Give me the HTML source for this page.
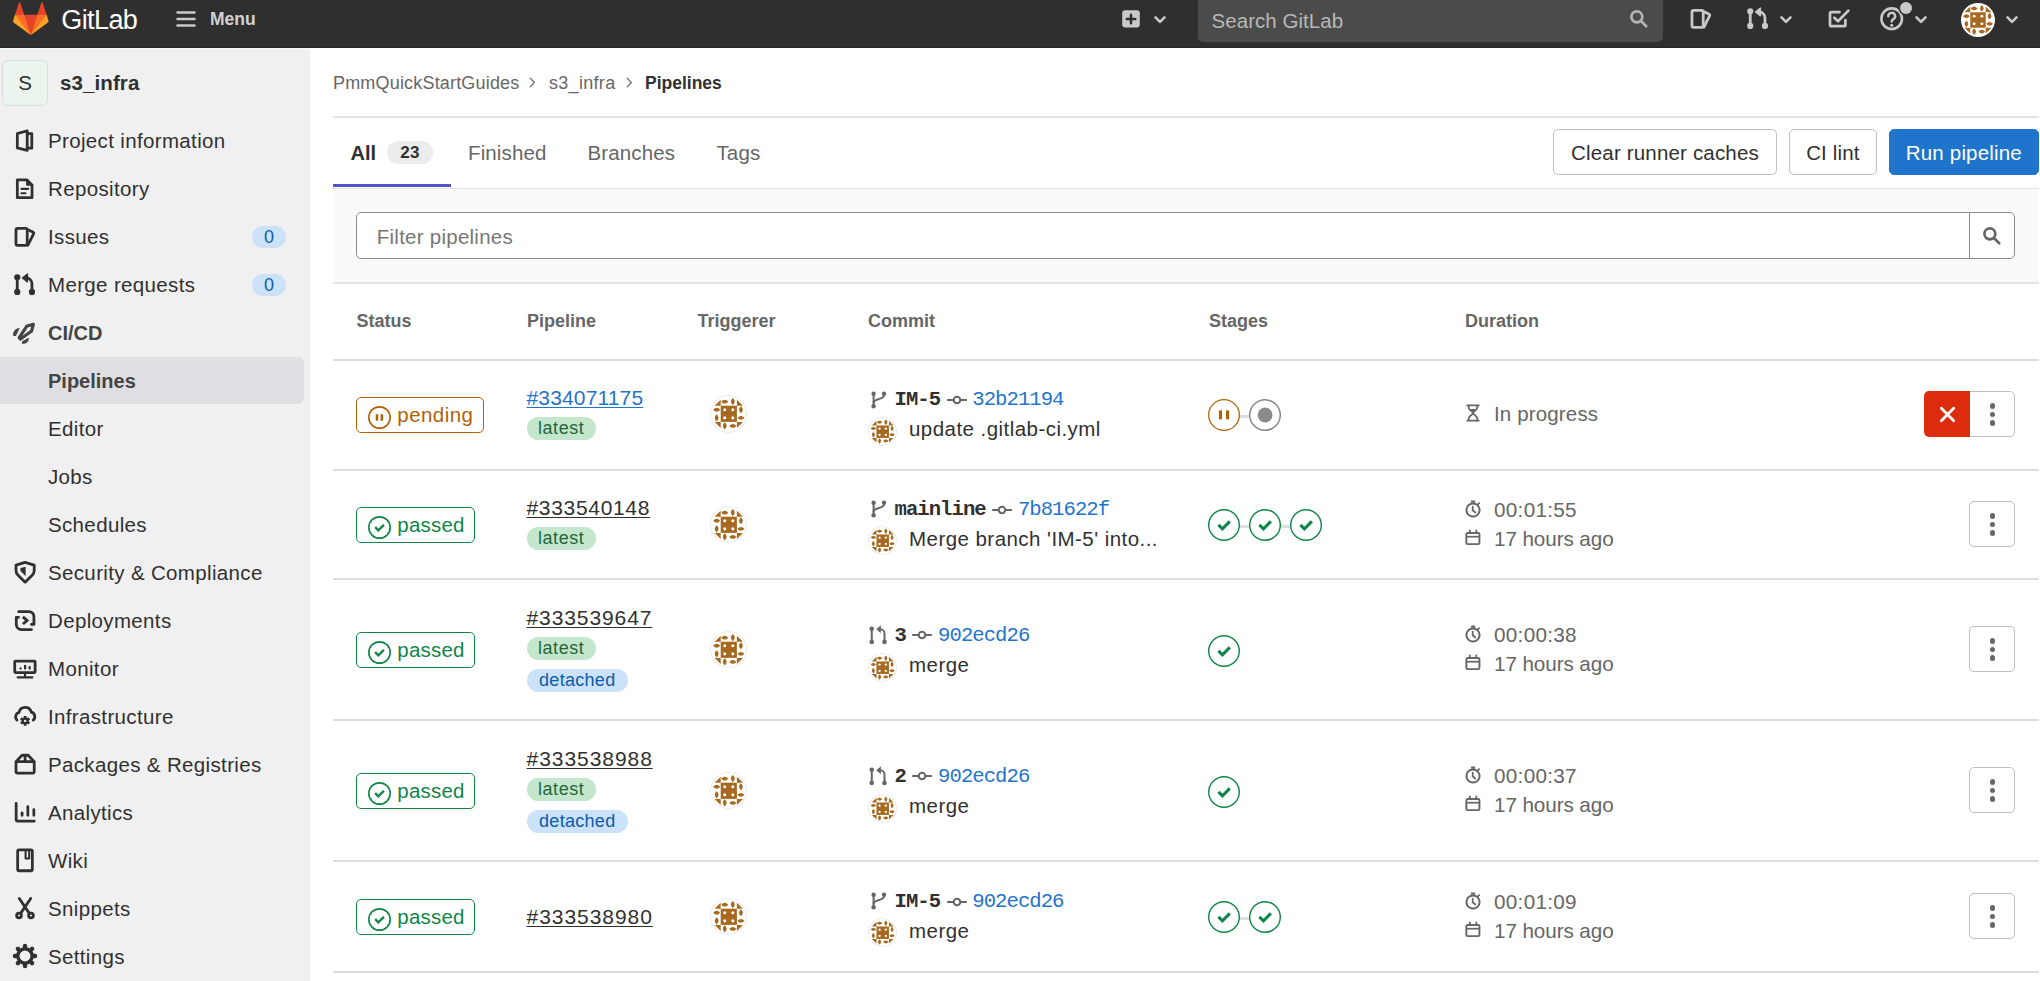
<!DOCTYPE html>
<html><head><meta charset="utf-8"><title>Pipelines · s3_infra · GitLab</title>
<style>
*{box-sizing:border-box;margin:0;padding:0}
html,body{width:2040px;height:981px;overflow:hidden;background:#fff}
body{font-family:"Liberation Sans",sans-serif;color:#303030;position:relative;font-size:20.5px;letter-spacing:.3px}
.abs{position:absolute}
.t{position:absolute;white-space:nowrap;line-height:1}
svg{display:block;overflow:visible}
#nav{position:absolute;left:0;top:0;width:2040px;height:48px;background:#2f2f2f;border-bottom:1px solid #272727}
#side{position:absolute;left:0;top:48px;width:310px;height:933px;background:#f0f0f0;border-top:1px solid #f8f8f8}
.ni{position:absolute;fill:#c9c9c9}
.si{position:absolute;left:12.7px;width:24px;height:24px;fill:none;stroke:#303030;stroke-width:1.85;stroke-linecap:round;stroke-linejoin:round}
.sl{position:absolute;left:48px;white-space:nowrap;line-height:24px;height:24px;font-size:20.5px;letter-spacing:.35px;color:#303030}
.pill{position:absolute;border-radius:20px;text-align:center;white-space:nowrap}
.hline{position:absolute;height:1px;background:#e1e1e1}
.th{position:absolute;top:311px;font-weight:700;font-size:18px;color:#666;line-height:20px;white-space:nowrap;letter-spacing:0}
.btn{position:absolute;top:129.1px;height:46.2px;border:1px solid #bfbfbf;border-radius:5px;background:#fff;line-height:45.4px;text-align:center;white-space:nowrap;font-size:20.5px;letter-spacing:.17px}
.badge{position:absolute;left:356px;height:36px;border:1.7px solid;border-radius:5px;background:#fff}
.mono{font-family:"Liberation Mono",monospace;letter-spacing:0}
.gray{color:#666}
.av{position:absolute;border-radius:50%;overflow:hidden;box-shadow:0 0 0 .6px rgba(0,0,0,.16)}
.av svg{width:100%;height:100%}
.dots{position:absolute;left:1969px;width:46px;height:46px;border:1px solid #bfbfbf;border-radius:5px;background:#fff}
.dots i{position:absolute;left:19.8px;width:5.6px;height:5.6px;border-radius:50%;background:#666}
.stg{position:absolute;width:32px;height:32px}
</style></head>
<body>

<svg width="0" height="0" style="position:absolute">
<defs>
<symbol id="av" viewBox="1 1 44 44">
<rect width="46" height="46" fill="#fff"/>
<g fill="#a7691f">
<rect x="13" y="13" width="20" height="20"/>
<path id="lh" d="M-4.4 0Q0-4.8 4.4 0 0 4.8-4.4 0Z" transform="translate(18 8)"/>
<path d="M-4.4 0Q0-4.8 4.4 0 0 4.8-4.4 0Z" transform="translate(28 8) rotate(90)"/>
<path d="M-4.4 0Q0-4.8 4.4 0 0 4.8-4.4 0Z" transform="translate(38 18) rotate(90)"/>
<path d="M-4.4 0Q0-4.8 4.4 0 0 4.8-4.4 0Z" transform="translate(38 28)"/>
<path d="M-4.4 0Q0-4.8 4.4 0 0 4.8-4.4 0Z" transform="translate(28 38)"/>
<path d="M-4.4 0Q0-4.8 4.4 0 0 4.8-4.4 0Z" transform="translate(18 38) rotate(90)"/>
<path d="M-4.4 0Q0-4.8 4.4 0 0 4.8-4.4 0Z" transform="translate(8 28) rotate(90)"/>
<path d="M-4.4 0Q0-4.8 4.4 0 0 4.8-4.4 0Z" transform="translate(8 18)"/>
<path d="M13 13V5.5L5.5 13Z"/><path d="M33 13V5.5L40.5 13Z"/><path d="M13 33V40.5L5.5 33Z"/><path d="M33 33V40.5L40.5 33Z"/>
</g>
<g fill="#fff"><circle cx="18" cy="18" r="1.9"/><circle cx="28" cy="18" r="1.9"/><circle cx="18" cy="28" r="1.9"/><circle cx="28" cy="28" r="1.9"/></g>
</symbol>
<symbol id="chev" viewBox="0 0 16 16"><path d="M4.22 6.22a.75.75 0 0 1 1.06 0L8 8.94l2.72-2.72a.75.75 0 1 1 1.06 1.06l-3.25 3.25a.75.75 0 0 1-1.06 0L4.22 7.28a.75.75 0 0 1 0-1.06z"/></symbol>
<symbol id="search" viewBox="0 0 16 16"><path fill-rule="evenodd" d="M11.5 7a4.5 4.5 0 1 1-9 0 4.5 4.5 0 0 1 9 0zm-.82 4.74a6 6 0 1 1 1.06-1.06l3.04 3.04a.75.75 0 1 1-1.06 1.06l-3.04-3.04z"/></symbol>
<symbol id="issues" viewBox="0 0 16 16"><path fill="none" stroke="currentColor" stroke-width="1.5" stroke-linejoin="round" stroke-linecap="round" d="M3.2 1.75h5.6a1.45 1.45 0 0 1 1.45 1.45v9.6a1.45 1.45 0 0 1-1.45 1.45H3.2a1.45 1.45 0 0 1-1.45-1.45V3.2A1.45 1.45 0 0 1 3.2 1.75zM10.25 4.2h1.1a1 1 0 0 1 .9.55l1.9 3.8a1 1 0 0 1 0 .9l-2.3 4.3a1 1 0 0 1-1.1.5M10.25 4.4l1.3 3.2-1.3 3.6"/></symbol>
<symbol id="mr" viewBox="0 0 16 16"><g fill="none" stroke="currentColor" stroke-width="1.5" stroke-linecap="round" stroke-linejoin="round"><path d="M3.2 4.6v6.8"/><path d="M12.8 11.2V7.3a2.3 2.3 0 0 0-2.3-2.3H8.2"/><path d="M10 2.3 7.6 5l2.4 2.4"/></g><circle cx="3.2" cy="3.1" r="1.6" fill="currentColor"/><circle cx="3.2" cy="12.9" r="1.6" fill="currentColor"/><circle cx="12.8" cy="12.9" r="1.6" fill="currentColor"/></symbol>
<symbol id="ok" viewBox="0 0 14 14"><g fill-rule="evenodd"><path d="M0 7a7 7 0 1 1 14 0A7 7 0 0 1 0 7z"/><path d="M13 7A6 6 0 1 0 1 7a6 6 0 0 0 12 0z" fill="#fff"/><path d="M6.278 7.697L5.045 6.464a.296.296 0 0 0-.42-.002l-.613.614a.298.298 0 0 0 .002.42l1.91 1.909a.5.5 0 0 0 .703.005l.265-.265L9.997 6.04a.291.291 0 0 0-.009-.408l-.614-.614a.29.29 0 0 0-.408-.009L6.278 7.697z"/></g></symbol>
<symbol id="pend" viewBox="0 0 14 14"><g fill-rule="evenodd"><path d="M0 7a7 7 0 1 1 14 0A7 7 0 0 1 0 7z"/><path d="M13 7A6 6 0 1 0 1 7a6 6 0 0 0 12 0z" fill="#fff"/><path d="M4.7 5.3c0-.2.1-.3.3-.3h.9c.2 0 .3.1.3.3v3.4c0 .2-.1.3-.3.3H5c-.2 0-.3-.1-.3-.3V5.3zm3 0c0-.2.1-.3.3-.3h.9c.2 0 .3.1.3.3v3.4c0 .2-.1.3-.3.3H8c-.2 0-.3-.1-.3-.3V5.3z"/></g></symbol>
<symbol id="branch" viewBox="0 0 16 16"><g fill="none" stroke="currentColor" stroke-width="1.6" stroke-linecap="round" stroke-linejoin="round"><path d="M4.2 5.2v5.6"/><path d="M11.8 5.4v.6a2.6 2.6 0 0 1-2.6 2.6H6.6a2.4 2.4 0 0 0-2.4 2.2"/></g><circle cx="4.2" cy="3.6" r="1.7" fill="currentColor"/><circle cx="4.2" cy="12.6" r="1.7" fill="currentColor"/><circle cx="11.8" cy="3.8" r="1.7" fill="currentColor"/></symbol>
<symbol id="commit" viewBox="0 0 16 16"><g fill="none" stroke="currentColor" stroke-width="1.6" stroke-linecap="round"><circle cx="8" cy="8" r="2.9"/><path d="M1 8h4M11 8h4"/></g></symbol>
<symbol id="timer" viewBox="0 0 16 16"><g fill="none" stroke="currentColor" stroke-width="1.5" stroke-linecap="round" stroke-linejoin="round"><circle cx="8" cy="9" r="5.6"/><path d="M8 5.8V9l1.8 1.6M6.4 1.4h3.2M12.6 3.6l.8-.8"/></g></symbol>
<symbol id="cal" viewBox="0 0 16 16"><g fill="none" stroke="currentColor" stroke-width="1.5" stroke-linecap="round" stroke-linejoin="round"><rect x="1.9" y="3.2" width="12.2" height="10.6" rx="1.2"/><path d="M1.9 6.7h12.2M5 1.6v2M11 1.6v2"/></g></symbol>
<symbol id="hour" viewBox="0 0 16 16"><g fill="none" stroke="currentColor" stroke-width="1.5" stroke-linecap="round" stroke-linejoin="round"><path d="M3.6 1.9h8.8M3.6 14.1h8.8M4.6 2v1.6c0 1.8 3.4 3 3.4 4.4 0 1.4-3.4 2.6-3.4 4.4V14M11.4 2v1.6c0 1.8-3.4 3-3.4 4.4 0 1.4 3.4 2.6 3.4 4.4V14"/></g></symbol>
</defs>
</svg>
<div id="nav">
<svg class="abs" style="left:12.6px;top:1.1px" width="35.6" height="35.6" viewBox="0 0 36 36"><path fill="#e24329" d="M2 14l9.38 9v-9l-4-12.28c-.205-.632-1.176-.632-1.38 0z"/><path fill="#e24329" d="M34 14l-9.38 9v-9l4-12.28c.205-.632 1.176-.632 1.38 0z"/><path fill="#e24329" d="M18 34.38 3 14 33 14Z"/><path fill="#fc6d26" d="M18 34.38 11.38 14 2 14 6 25Z"/><path fill="#fc6d26" d="M18 34.38 24.62 14 34 14 30 25Z"/><path fill="#fca326" d="M2 14L.1 20.16c-.18.565 0 1.2.5 1.56l17.42 12.66z"/><path fill="#fca326" d="M34 14l1.9 6.16c.18.565 0 1.2-.5 1.56L18 34.38z"/></svg>
<div class="t" style="left:61.3px;top:4.6px;font-size:27px;color:#fff;letter-spacing:-.6px;line-height:30px">GitLab</div>
<svg class="ni" style="left:174px;top:6.8px" width="24" height="24" viewBox="0 0 16 16"><path d="M1.5 3.7a.85.85 0 0 1 .85-.85h11.3a.85.85 0 0 1 0 1.7H2.35a.85.85 0 0 1-.85-.85zm0 4.3a.85.85 0 0 1 .85-.85h11.3a.85.85 0 0 1 0 1.7H2.35A.85.85 0 0 1 1.5 8zm.85 3.45a.85.85 0 0 0 0 1.7h11.3a.85.85 0 0 0 0-1.7H2.35z"/></svg>
<div class="t" style="left:210px;top:9px;font-size:17.5px;font-weight:700;color:#d2d2d2;letter-spacing:0;line-height:20px">Menu</div>
<svg class="abs" style="left:1122px;top:10px" width="18" height="18" viewBox="0 0 18 18"><rect x=".2" y=".2" width="17.6" height="17.4" rx="3" fill="#c9c9c9"/><path d="M9 4.7V13.3M4.7 9H13.3" stroke="#2f2f2f" stroke-width="2.5" stroke-linecap="round"/></svg>
<svg class="abs" style="left:1154.3px;top:14px" width="12" height="12" viewBox="0 0 12 12"><path d="M1.5 3.3 6 7.8 10.5 3.3" fill="none" stroke="#c9c9c9" stroke-width="2.6" stroke-linecap="round" stroke-linejoin="round"/></svg>
<div class="abs" style="left:1197.8px;top:-6px;width:465.7px;height:47.8px;background:#4b4b4b;border-radius:5px"></div>
<div class="t" style="left:1211.5px;top:8.7px;font-size:20.5px;color:#b8b8b8;letter-spacing:.05px;line-height:24px">Search GitLab</div>
<svg class="abs" style="left:1629px;top:9px" width="20" height="20" viewBox="0 0 20 20"><g fill="none" stroke="#b4b4b4" stroke-width="2.7" stroke-linecap="round"><circle cx="7.85" cy="7.85" r="5.45"/><path d="M12 12 17.2 17.2"/></g></svg>
<svg class="abs" style="left:1779.7px;top:14px" width="12" height="12" viewBox="0 0 12 12"><path d="M1.5 3.3 6 7.8 10.5 3.3" fill="none" stroke="#c9c9c9" stroke-width="2.6" stroke-linecap="round" stroke-linejoin="round"/></svg>
<svg class="abs" style="left:1826px;top:7px" width="26" height="26" viewBox="0 0 26 26"><g fill="none" stroke="#c9c9c9" stroke-width="2.7" stroke-linecap="round" stroke-linejoin="round"><path d="M13.5 5.1H5.5A1.5 1.5 0 0 0 4 6.6V17.7A1.5 1.5 0 0 0 5.5 19.2H17.9A1.5 1.5 0 0 0 19.4 17.7V13"/><path d="M8.3 10.7 12 14.3 22.4 3.6"/></g></svg>
<svg class="abs" style="left:1879px;top:5.9px" width="26" height="26" viewBox="0 0 26 26"><circle cx="12.7" cy="12.7" r="10.3" fill="none" stroke="#c9c9c9" stroke-width="2.6"/><path fill="none" stroke="#c9c9c9" stroke-width="2.4" stroke-linecap="round" d="M9.3 10.2A3.4 3.4 0 1 1 14.4 13.1C13.2 13.8 12.7 14.4 12.7 15.6"/><circle cx="12.7" cy="19.3" r="1.55" fill="#c9c9c9"/></svg>
<div class="abs" style="left:1899.6px;top:2.1px;width:12.4px;height:12.4px;border-radius:50%;background:#c9c9c9;box-shadow:0 0 0 1.5px #2f2f2f"></div>
<svg class="abs" style="left:1915px;top:14px" width="12" height="12" viewBox="0 0 12 12"><path d="M1.5 3.3 6 7.8 10.5 3.3" fill="none" stroke="#c9c9c9" stroke-width="2.6" stroke-linecap="round" stroke-linejoin="round"/></svg>
<div class="av" style="left:1961.2px;top:2.6px;width:34px;height:34px;box-shadow:none"><svg><use href="#av"/></svg></div>
<svg class="abs" style="left:2006.2px;top:14px" width="12" height="12" viewBox="0 0 12 12"><path d="M1.5 3.3 6 7.8 10.5 3.3" fill="none" stroke="#c9c9c9" stroke-width="2.6" stroke-linecap="round" stroke-linejoin="round"/></svg>
</div>
<div id="side"></div>
<div class="abs" style="left:2px;top:60px;width:46px;height:46px;border-radius:6px;background:#ecf4ee;border:1px solid #d5e0d8"></div>
<div class="t" style="left:2px;top:71px;width:46px;text-align:center;font-size:20.5px;line-height:24px;letter-spacing:0">S</div>
<div class="t" style="left:60px;top:71px;font-size:20.5px;font-weight:700;line-height:24px;letter-spacing:.1px">s3_infra</div>
<svg class="si" style="left:1688.1px;top:6.9px;stroke:#c9c9c9" viewBox="0 0 16 16"><rect x="2.65" y="2.2" width="7.5" height="11.45" rx="1.1"/><path d="M10.3 3 14.2 4.9a.6.6 0 0 1 .25.8L10.6 13.5"/></svg>
<svg class="si" style="left:1745.2px;top:7.1px;stroke:#c9c9c9" viewBox="0 0 16 16"><path d="M3.5 3.2V12.4M13.3 12V7.1A3.8 3.8 0 0 0 9.5 3.3H9.3"/><circle cx="3.5" cy="2.85" r="1.15" fill="#c9c9c9"/><circle cx="3.5" cy="12.65" r="1.15" fill="#c9c9c9"/><circle cx="13.3" cy="12.65" r="1.15" fill="#c9c9c9"/><path d="M7 3.3 10.3.700V5.9Z" fill="#c9c9c9" stroke-width=".9"/></svg>
<div class="abs" style="left:0;top:356.9px;width:304px;height:47px;background:#dfdfe3;border-radius:0 6px 6px 0"></div>
<svg class="si" style="left:11.9px;top:129px;stroke:#303030" viewBox="0 0 16 16"><path d="M3.55 3 10.15 1.2V14.3L3.55 12.6Z"/><path d="M10.15 3.1H13.2V12.8H10.15"/></svg>
<div class="sl" style="top:128.5px;">Project information</div>
<svg class="si" style="left:11.9px;top:177px;stroke:#303030" viewBox="0 0 16 16"><path d="M3.55 1.95H10L13.35 5.3V13.75H3.55Z"/><path d="M9.9 2.1V5.4H13.2Z" fill="#303030" stroke-width="1"/><path d="M6.3 7.9H10.8M6.3 10.8H9" stroke-width="1.4"/></svg>
<div class="sl" style="top:176.5px;">Repository</div>
<svg class="si" style="left:11.9px;top:225px;stroke:#303030" viewBox="0 0 16 16"><rect x="2.65" y="2.2" width="7.5" height="11.45" rx="1.1"/><path d="M10.3 3 14.2 4.9a.6.6 0 0 1 .25.8L10.6 13.5"/></svg>
<div class="sl" style="top:224.5px;">Issues</div>
<svg class="si" style="left:11.9px;top:273px;stroke:#303030" viewBox="0 0 16 16"><path d="M3.5 3.2V12.4M13.3 12V7.1A3.8 3.8 0 0 0 9.5 3.3H9.3"/><circle cx="3.5" cy="2.85" r="1.15" fill="#303030"/><circle cx="3.5" cy="12.65" r="1.15" fill="#303030"/><circle cx="13.3" cy="12.65" r="1.15" fill="#303030"/><path d="M7 3.3 10.3.700V5.9Z" fill="#303030" stroke-width=".9"/></svg>
<div class="sl" style="top:272.5px;">Merge requests</div>
<svg class="si" style="left:11.9px;top:321px;stroke:#444" viewBox="0 0 16 16"><path d="M14.25 2.15 10 3.3 4.8 11.1 5.7 12.05 13.1 6.6Z" stroke-width="2.1"/><path d="M5.2 4.7Q.9 4.7.5 9.7L2.5 10.1Z" fill="#444" stroke="none"/><path d="M11.3 11Q11.4 15 6.8 15.4L6.6 13.7Z" fill="#444" stroke="none"/></svg>
<div class="sl" style="top:320.5px;font-weight:700;color:#444;letter-spacing:0;font-size:20px;">CI/CD</div>
<div class="sl" style="top:368.5px;font-weight:700;color:#444;letter-spacing:0;font-size:20px;">Pipelines</div>
<div class="sl" style="top:416.5px;">Editor</div>
<div class="sl" style="top:464.5px;">Jobs</div>
<div class="sl" style="top:512.5px;">Schedules</div>
<svg class="si" style="left:12.7px;top:561px;stroke:#303030" viewBox="0 0 16 16"><path d="M8.07.950 14.15 2.7V6.3Q14.15 8.2 12.6 9.7L8.07 14.1 3.55 9.7Q2 8.2 2 6.3V2.7Z"/><path d="M5 4.7 8.4 3.8V10L5 6.6Z" fill="#303030" stroke="none"/></svg>
<div class="sl" style="top:560.5px;">Security &amp; Compliance</div>
<svg class="si" style="left:12.7px;top:609px;stroke:#303030" viewBox="0 0 16 16"><path d="M3.8 1.75H10.65A3.3 3.3 0 0 1 13.95 5.05V10.3H12.3M3.7 5.55H2.2V10.4A3.3 3.3 0 0 0 5.5 13.7H12.35"/><path d="M6.6 5.3 9.35 7.65 6.6 10" stroke-width="1.9" stroke-linejoin="miter" stroke-linecap="butt"/></svg>
<div class="sl" style="top:608.5px;">Deployments</div>
<svg class="si" style="left:12.7px;top:657px;stroke:#303030" viewBox="0 0 16 16"><rect x="1.15" y="2.8" width="13.6" height="7.6" rx=".5"/><path d="M8 10.6V13M3.1 13.6H12.9" stroke-width="1.4"/><path d="M5 7.7V7.6M8.07 7.7V5.9M11.1 7.7V6.7" stroke-width="1.5"/></svg>
<div class="sl" style="top:656.5px;">Monitor</div>
<svg class="si" style="left:12.7px;top:705px;stroke:#303030" viewBox="0 0 16 16"><path d="M2.7 10.1A3.1 3.1 0 0 1 4 4.9 4.2 4.2 0 0 1 12.2 4.8 3.1 3.1 0 0 1 13.5 10.1"/><g stroke-width="1.9" stroke-linecap="butt"><path d="M8.07 7.3V13.9M5.21 8.95 10.93 12.25M5.21 12.25 10.93 8.95"/></g><circle cx="8.07" cy="10.6" r="2.3" fill="#303030" stroke="none"/><circle cx="8.07" cy="10.6" r=".8" fill="#f0f0f0" stroke="none"/></svg>
<div class="sl" style="top:704.5px;">Infrastructure</div>
<svg class="si" style="left:12.7px;top:753px;stroke:#303030" viewBox="0 0 16 16"><path d="M2 5.75H14.15V12.35A1 1 0 0 1 13.15 13.35H3A1 1 0 0 1 2 12.35ZM2 5.75 6 1.5H10.1L14.15 5.75M8.07 1.5V5.75"/></svg>
<div class="sl" style="top:752.5px;">Packages &amp; Registries</div>
<svg class="si" style="left:12.7px;top:801px;stroke:#303030" viewBox="0 0 16 16"><path d="M2.1 1.6V12.4A1 1 0 0 0 3.1 13.4H14.2"/><path d="M6.05 7.9V9.5M9.9 3.7V9.5M13.9 5.7V9.5"/></svg>
<div class="sl" style="top:800.5px;">Analytics</div>
<svg class="si" style="left:12.7px;top:849px;stroke:#303030" viewBox="0 0 16 16"><rect x="3.1" y=".6" width="9.8" height="13.9" rx="1"/><path d="M8.4.8V6.3H10.8V.8" stroke-width="1.4"/></svg>
<div class="sl" style="top:848.5px;">Wiki</div>
<svg class="si" style="left:12.7px;top:897px;stroke:#303030" viewBox="0 0 16 16"><circle cx="4" cy="12.3" r="1.6"/><circle cx="12" cy="12.3" r="1.6"/><path d="M4.2 1 10.9 10.9M11.8 1 5.1 10.9"/></svg>
<div class="sl" style="top:896.5px;">Snippets</div>
<svg class="si" style="left:12.7px;top:944.1px;stroke:#303030" viewBox="0 0 16 16"><circle cx="8" cy="8" r="4.8" stroke-width="2.3"/><path d="M8 1.9V1.3M8 14.1V14.7M1.9 8H1.3M14.1 8H14.7M3.7 3.7 3.26 3.26M12.3 12.3 12.74 12.74M3.7 12.3 3.26 12.74M12.3 3.7 12.74 3.26" stroke-width="2.9"/></svg>
<div class="sl" style="top:944.5px;">Settings</div>
<div class="pill" style="left:252px;top:225.5px;width:34px;height:22.5px;background:#cbe2f9;color:#0b5cad;font-size:18px;line-height:22.5px;letter-spacing:0">0</div>
<div class="pill" style="left:252px;top:273.5px;width:34px;height:22.5px;background:#cbe2f9;color:#0b5cad;font-size:18px;line-height:22.5px;letter-spacing:0">0</div>
<div class="t gray" style="left:333px;top:72.6px;font-size:18px;line-height:20px;letter-spacing:.18px">PmmQuickStartGuides</div>
<div class="t gray" style="left:549px;top:72.6px;font-size:18px;line-height:20px;letter-spacing:.3px">s3_infra</div>
<div class="t" style="left:645px;top:72.6px;font-size:17.5px;font-weight:700;line-height:20px;letter-spacing:0">Pipelines</div>
<svg class="abs" style="left:529px;top:77px" width="7" height="11" viewBox="0 0 7 11"><path d="M1.3 1.3 5.4 5.5 1.3 9.7" fill="none" stroke="#777" stroke-width="1.4" stroke-linecap="round" stroke-linejoin="round"/></svg>
<svg class="abs" style="left:626px;top:77px" width="7" height="11" viewBox="0 0 7 11"><path d="M1.3 1.3 5.4 5.5 1.3 9.7" fill="none" stroke="#777" stroke-width="1.4" stroke-linecap="round" stroke-linejoin="round"/></svg>
<div class="hline" style="left:333px;top:116px;width:1706px;height:1.5px;background:#e3e3e3"></div>
<div class="t" style="left:350.5px;top:141px;font-size:20px;font-weight:700;line-height:24px;letter-spacing:0">All</div>
<div class="pill" style="left:387px;top:141px;width:46px;height:23px;background:#ececec;color:#303030;font-size:17px;font-weight:700;line-height:23px;letter-spacing:.4px">23</div>
<div class="t gray" style="left:468px;top:141px;font-size:20.5px;line-height:24px;letter-spacing:.12px">Finished</div>
<div class="t gray" style="left:587.5px;top:141px;font-size:20.5px;line-height:24px;letter-spacing:.12px">Branches</div>
<div class="t gray" style="left:716.5px;top:141px;font-size:20.5px;line-height:24px;letter-spacing:.12px">Tags</div>
<div class="hline" style="left:333px;top:187.5px;width:1706px;background:#e3e3e3"></div>
<div class="abs" style="left:333px;top:184.3px;width:117.7px;height:3.2px;background:#5252cc"></div>
<div class="btn" style="left:1553px;width:224px">Clear runner caches</div>
<div class="btn" style="left:1788.7px;width:88.5px">CI lint</div>
<div class="btn" style="left:1888.7px;width:150.3px;background:#1f75cb;border-color:#1f75cb;color:#fff">Run pipeline</div>
<div class="abs" style="left:333px;top:188.5px;width:1706px;height:94px;background:#fafafa"></div>
<div class="hline" style="left:333px;top:282px;width:1706px;height:1.5px;background:#e3e3e3"></div>
<div class="abs" style="left:355.8px;top:212px;width:1659px;height:46.5px;border:1.3px solid #8c8c8c;border-radius:5px;background:#fff"></div>
<div class="abs" style="left:1969px;top:213px;width:1.3px;height:44.5px;background:#8c8c8c"></div>
<div class="t" style="left:376.8px;top:224.5px;font-size:20.5px;color:#767676;line-height:24px;letter-spacing:.25px">Filter pipelines</div>
<svg class="abs" style="left:1982.2px;top:226.4px" width="20" height="20" viewBox="0 0 20 20"><g fill="none" stroke="#666" stroke-width="2.7" stroke-linecap="round"><circle cx="7.85" cy="7.85" r="5.45"/><path d="M12 12 17.2 17.2"/></g></svg>
<div class="th" style="left:356.5px">Status</div>
<div class="th" style="left:527px">Pipeline</div>
<div class="th" style="left:697.5px">Triggerer</div>
<div class="th" style="left:868px">Commit</div>
<div class="th" style="left:1209px">Stages</div>
<div class="th" style="left:1465px">Duration</div>
<div class="hline" style="left:333px;top:359px;width:1706px;height:1.5px;background:#dcdcdc"></div>
<div class="hline" style="left:333px;top:469px;width:1706px;height:1.5px;background:#dcdcdc"></div>
<div class="badge" style="top:397px;width:127.5px;border-color:#b26205"></div>
<svg class="abs" style="left:368px;top:405.5px;fill:#b26205" width="23" height="23"><use href="#pend"/></svg>
<div class="t" style="left:397.3px;top:402.7px;font-size:20.5px;line-height:24px;color:#b26205;letter-spacing:.45px">pending</div>
<div class="t" style="left:526.5px;top:386.3px;font-size:21px;line-height:24px;color:#1f75cb;text-decoration:underline;text-decoration-thickness:1.3px;text-underline-offset:1.5px;letter-spacing:.15px">#334071175</div>
<div class="pill" style="left:526.5px;top:417.3px;width:69.3px;height:23px;background:#c3e6cd;color:#24663b;font-size:18px;line-height:23px;letter-spacing:.55px">latest</div>
<div class="av" style="left:710.7px;top:396.2px;width:35.6px;height:35.6px"><svg><use href="#av"/></svg></div>
<svg class="abs" style="left:869.5px;top:390.8px" width="18" height="18" viewBox="0 0 18 18"><g fill="none" stroke="#666" stroke-width="2" stroke-linecap="round"><path d="M3.6 2.6V15.4"/><path d="M14 2.6V4.5C14 8.9 3.6 7 3.6 11.8"/></g><g fill="#666"><circle cx="3.6" cy="2.7" r="2.2"/><circle cx="14" cy="2.7" r="2.2"/><circle cx="3.6" cy="15.3" r="2.2"/></g></svg>
<div class="t mono" style="left:894.5px;top:388.1px;font-size:20.6px;letter-spacing:-.96px;font-weight:700;line-height:24px">IM-5</div>
<svg class="abs" style="left:946.5px;top:395px" width="20" height="10" viewBox="0 0 20 10"><g fill="none" stroke="#666" stroke-width="2.05" stroke-linecap="round"><circle cx="10" cy="5" r="3.3"/><path d="M.9 5H6.2M13.8 5H19.1"/></g></svg>
<div class="t mono" style="left:972.3px;top:388.1px;font-size:20.6px;letter-spacing:-.96px;line-height:24px;color:#1f75cb">32b21194</div>
<div class="av" style="left:869.1px;top:417.5px;width:27.4px;height:27.4px"><svg><use href="#av"/></svg></div>
<div class="t" style="left:909px;top:417px;font-size:20.5px;line-height:24px;letter-spacing:.45px">update .gitlab-ci.yml</div>
<div class="abs" style="left:1230px;top:415.29999999999995px;width:41px;height:2.8px;background:#dfdfe1"></div>
<svg class="abs" style="left:1208.2px;top:399.4px" width="32" height="32" viewBox="0 0 32 32"><circle cx="16" cy="16" r="15.35" fill="#fff" stroke="#b26205" stroke-width="1.3"/><rect x="10.9" y="11.4" width="3.1" height="8.9" fill="#b26205"/><rect x="18" y="11.4" width="3.1" height="8.9" fill="#b26205"/></svg>
<svg class="abs" style="left:1248.9px;top:399.4px" width="32" height="32" viewBox="0 0 32 32"><circle cx="16" cy="16" r="15.3" fill="#fff" stroke="#848484" stroke-width="1.4"/><circle cx="16.1" cy="16" r="7.4" fill="#8b8b8b"/></svg>
<svg class="abs" style="left:1463.9px;top:402.9px" width="18" height="20" viewBox="0 0 18 20"><g fill="none" stroke="#666" stroke-width="1.8" stroke-linecap="round" stroke-linejoin="round"><path d="M3.2 2.4H14.8M3.2 17.6H14.8"/><path d="M4.7 2.6V4.8C4.7 7 9 8.3 9 10 9 11.7 4.7 13 4.7 15.2V17.4M13.3 2.6V4.8C13.3 7 9 8.3 9 10 9 11.7 13.3 13 13.3 15.2V17.4"/></g><path d="M5.4 6.1H12.6L9 9.8Z" fill="#666"/></svg>
<div class="t gray" style="left:1494px;top:402.3px;font-size:20.5px;line-height:24px;letter-spacing:.15px">In progress</div>
<div class="dots" style="top:391.2px;border-radius:0 5px 5px 0;"><i style="top:10.8px"></i><i style="top:19.5px"></i><i style="top:28.2px"></i></div>
<div class="abs" style="left:1923.5px;top:391.2px;width:46px;height:46px;background:#dd2b0e;border-radius:5px 0 0 5px"></div>
<svg class="abs" style="left:1938.5px;top:405.9px" width="17" height="17" viewBox="0 0 17 17"><path d="M2.3 2.3l12.4 12.4M14.7 2.3 2.3 14.7" stroke="#fff" stroke-width="2.8" stroke-linecap="round"/></svg>
<div class="hline" style="left:333px;top:578px;width:1706px;height:1.5px;background:#dcdcdc"></div>
<div class="badge" style="top:507.1px;width:119px;border-color:#108548"></div>
<svg class="abs" style="left:368px;top:515.6px;fill:#108548" width="23" height="23"><use href="#ok"/></svg>
<div class="t" style="left:397.3px;top:512.8000000000001px;font-size:20.5px;line-height:24px;color:#108548;letter-spacing:.2px">passed</div>
<div class="t" style="left:526.5px;top:495.8px;font-size:21px;line-height:24px;color:#303030;text-decoration:underline;text-decoration-thickness:1.3px;text-underline-offset:1.5px;letter-spacing:.68px">#333540148</div>
<div class="pill" style="left:526.5px;top:526.8px;width:69.3px;height:23px;background:#c3e6cd;color:#24663b;font-size:18px;line-height:23px;letter-spacing:.55px">latest</div>
<div class="av" style="left:710.7px;top:506.7px;width:35.6px;height:35.6px"><svg><use href="#av"/></svg></div>
<svg class="abs" style="left:869.5px;top:500.3px" width="18" height="18" viewBox="0 0 18 18"><g fill="none" stroke="#666" stroke-width="2" stroke-linecap="round"><path d="M3.6 2.6V15.4"/><path d="M14 2.6V4.5C14 8.9 3.6 7 3.6 11.8"/></g><g fill="#666"><circle cx="3.6" cy="2.7" r="2.2"/><circle cx="14" cy="2.7" r="2.2"/><circle cx="3.6" cy="15.3" r="2.2"/></g></svg>
<div class="t mono" style="left:894.5px;top:497.6px;font-size:20.6px;letter-spacing:-.96px;font-weight:700;line-height:24px">mainline</div>
<svg class="abs" style="left:992.1px;top:504.5px" width="20" height="10" viewBox="0 0 20 10"><g fill="none" stroke="#666" stroke-width="2.05" stroke-linecap="round"><circle cx="10" cy="5" r="3.3"/><path d="M.9 5H6.2M13.8 5H19.1"/></g></svg>
<div class="t mono" style="left:1017.9px;top:497.6px;font-size:20.6px;letter-spacing:-.96px;line-height:24px;color:#1f75cb">7b81622f</div>
<div class="av" style="left:869.1px;top:527px;width:27.4px;height:27.4px"><svg><use href="#av"/></svg></div>
<div class="t" style="left:909px;top:526.5px;font-size:20.5px;line-height:24px;letter-spacing:.45px">Merge branch 'IM-5' into...</div>
<div class="abs" style="left:1230px;top:524.8px;width:82px;height:2.8px;background:#dfdfe1"></div>
<svg class="abs" style="left:1208.2px;top:508.9px" width="32" height="32" viewBox="0 0 32 32"><circle cx="16" cy="16" r="15.3" fill="#fff" stroke="#108548" stroke-width="1.4"/><path d="M10.4 15.8 14.45 19.8 21.8 12.45" fill="none" stroke="#108548" stroke-width="3.1" stroke-linejoin="miter"/></svg>
<svg class="abs" style="left:1248.9px;top:508.9px" width="32" height="32" viewBox="0 0 32 32"><circle cx="16" cy="16" r="15.3" fill="#fff" stroke="#108548" stroke-width="1.4"/><path d="M10.4 15.8 14.45 19.8 21.8 12.45" fill="none" stroke="#108548" stroke-width="3.1" stroke-linejoin="miter"/></svg>
<svg class="abs" style="left:1289.6000000000001px;top:508.9px" width="32" height="32" viewBox="0 0 32 32"><circle cx="16" cy="16" r="15.3" fill="#fff" stroke="#108548" stroke-width="1.4"/><path d="M10.4 15.8 14.45 19.8 21.8 12.45" fill="none" stroke="#108548" stroke-width="3.1" stroke-linejoin="miter"/></svg>
<svg class="abs" style="left:1462.9px;top:498.5px" width="20" height="20" viewBox="0 0 20 20"><g fill="none" stroke="#666" stroke-linecap="round" stroke-linejoin="round"><circle cx="10" cy="11" r="6.6" stroke-width="2"/><path d="M9.7 7.6V11.3L12.3 13.5" stroke-width="1.8"/><path d="M14.9 5.3 16.1 4.1" stroke-width="1.8"/></g><rect x="8" y="1.5" width="4.2" height="2.2" rx=".4" fill="#666"/></svg>
<div class="t gray" style="left:1494px;top:497.8px;font-size:20.7px;line-height:24px;letter-spacing:.3px">00:01:55</div>
<svg class="abs" style="left:1462.9px;top:528px" width="20" height="20" viewBox="0 0 20 20"><g fill="none" stroke="#666" stroke-linejoin="round"><rect x="3.35" y="4.95" width="13.1" height="11.2" rx="1.3" stroke-width="1.9"/><path d="M3.4 8.7H16.4" stroke-width="1.7"/><path d="M6.9 2.4V5M13.3 2.4V5" stroke-width="1.8" stroke-linecap="round"/></g></svg>
<div class="t gray" style="left:1494px;top:526.9px;font-size:20.7px;line-height:24px;letter-spacing:-.1px">17 hours ago</div>
<div class="dots" style="top:501.2px;"><i style="top:10.8px"></i><i style="top:19.5px"></i><i style="top:28.2px"></i></div>
<div class="hline" style="left:333px;top:719px;width:1706px;height:1.5px;background:#dcdcdc"></div>
<div class="badge" style="top:632.1px;width:119px;border-color:#108548"></div>
<svg class="abs" style="left:368px;top:640.6px;fill:#108548" width="23" height="23"><use href="#ok"/></svg>
<div class="t" style="left:397.3px;top:637.8000000000001px;font-size:20.5px;line-height:24px;color:#108548;letter-spacing:.2px">passed</div>
<div class="t" style="left:526.5px;top:605.6px;font-size:21px;line-height:24px;color:#303030;text-decoration:underline;text-decoration-thickness:1.3px;text-underline-offset:1.5px;letter-spacing:.9px">#333539647</div>
<div class="pill" style="left:526.5px;top:636.6px;width:69.3px;height:23px;background:#c3e6cd;color:#24663b;font-size:18px;line-height:23px;letter-spacing:.55px">latest</div>
<div class="pill" style="left:526.5px;top:668.6px;width:101.5px;height:23px;background:#cbe2f9;color:#0b5cad;font-size:18px;line-height:23px;letter-spacing:.3px">detached</div>
<div class="av" style="left:710.7px;top:631.7px;width:35.6px;height:35.6px"><svg><use href="#av"/></svg></div>
<svg class="abs" style="left:868px;top:624.1999999999999px" width="22" height="22" viewBox="0 0 22 22"><g fill="none" stroke="#666" stroke-width="2" stroke-linecap="round"><path d="M3.75 4.8V17.9"/><path d="M16.5 17.5V9.6A4.3 4.3 0 0 0 12.2 5.3H11.8"/></g><g fill="#666"><circle cx="3.75" cy="4.8" r="2.3"/><circle cx="3.75" cy="17.9" r="2.3"/><circle cx="16.5" cy="17.9" r="2.3"/><path d="M8.3 5.3 12.9 1.3V9.2Z"/></g></svg>
<div class="t mono" style="left:894.5px;top:623.4999999999999px;font-size:20.6px;letter-spacing:-.96px;font-weight:700;line-height:24px">3</div>
<svg class="abs" style="left:912.3px;top:630.4px" width="20" height="10" viewBox="0 0 20 10"><g fill="none" stroke="#666" stroke-width="2.05" stroke-linecap="round"><circle cx="10" cy="5" r="3.3"/><path d="M.9 5H6.2M13.8 5H19.1"/></g></svg>
<div class="t mono" style="left:938.0999999999999px;top:623.4999999999999px;font-size:20.6px;letter-spacing:-.96px;line-height:24px;color:#1f75cb">902ecd26</div>
<div class="av" style="left:869.1px;top:653.5px;width:27.4px;height:27.4px"><svg><use href="#av"/></svg></div>
<div class="t" style="left:909px;top:653px;font-size:20.5px;line-height:24px;letter-spacing:.45px">merge</div>
<svg class="abs" style="left:1208.2px;top:634.6999999999999px" width="32" height="32" viewBox="0 0 32 32"><circle cx="16" cy="16" r="15.3" fill="#fff" stroke="#108548" stroke-width="1.4"/><path d="M10.4 15.8 14.45 19.8 21.8 12.45" fill="none" stroke="#108548" stroke-width="3.1" stroke-linejoin="miter"/></svg>
<svg class="abs" style="left:1462.9px;top:623.5px" width="20" height="20" viewBox="0 0 20 20"><g fill="none" stroke="#666" stroke-linecap="round" stroke-linejoin="round"><circle cx="10" cy="11" r="6.6" stroke-width="2"/><path d="M9.7 7.6V11.3L12.3 13.5" stroke-width="1.8"/><path d="M14.9 5.3 16.1 4.1" stroke-width="1.8"/></g><rect x="8" y="1.5" width="4.2" height="2.2" rx=".4" fill="#666"/></svg>
<div class="t gray" style="left:1494px;top:622.8px;font-size:20.7px;line-height:24px;letter-spacing:.3px">00:00:38</div>
<svg class="abs" style="left:1462.9px;top:653px" width="20" height="20" viewBox="0 0 20 20"><g fill="none" stroke="#666" stroke-linejoin="round"><rect x="3.35" y="4.95" width="13.1" height="11.2" rx="1.3" stroke-width="1.9"/><path d="M3.4 8.7H16.4" stroke-width="1.7"/><path d="M6.9 2.4V5M13.3 2.4V5" stroke-width="1.8" stroke-linecap="round"/></g></svg>
<div class="t gray" style="left:1494px;top:651.9px;font-size:20.7px;line-height:24px;letter-spacing:-.1px">17 hours ago</div>
<div class="dots" style="top:626.2px;"><i style="top:10.8px"></i><i style="top:19.5px"></i><i style="top:28.2px"></i></div>
<div class="hline" style="left:333px;top:860px;width:1706px;height:1.5px;background:#dcdcdc"></div>
<div class="badge" style="top:773.1px;width:119px;border-color:#108548"></div>
<svg class="abs" style="left:368px;top:781.6px;fill:#108548" width="23" height="23"><use href="#ok"/></svg>
<div class="t" style="left:397.3px;top:778.8000000000001px;font-size:20.5px;line-height:24px;color:#108548;letter-spacing:.2px">passed</div>
<div class="t" style="left:526.5px;top:746.6px;font-size:21px;line-height:24px;color:#303030;text-decoration:underline;text-decoration-thickness:1.3px;text-underline-offset:1.5px;letter-spacing:.95px">#333538988</div>
<div class="pill" style="left:526.5px;top:777.6px;width:69.3px;height:23px;background:#c3e6cd;color:#24663b;font-size:18px;line-height:23px;letter-spacing:.55px">latest</div>
<div class="pill" style="left:526.5px;top:809.6px;width:101.5px;height:23px;background:#cbe2f9;color:#0b5cad;font-size:18px;line-height:23px;letter-spacing:.3px">detached</div>
<div class="av" style="left:710.7px;top:772.7px;width:35.6px;height:35.6px"><svg><use href="#av"/></svg></div>
<svg class="abs" style="left:868px;top:765.1999999999999px" width="22" height="22" viewBox="0 0 22 22"><g fill="none" stroke="#666" stroke-width="2" stroke-linecap="round"><path d="M3.75 4.8V17.9"/><path d="M16.5 17.5V9.6A4.3 4.3 0 0 0 12.2 5.3H11.8"/></g><g fill="#666"><circle cx="3.75" cy="4.8" r="2.3"/><circle cx="3.75" cy="17.9" r="2.3"/><circle cx="16.5" cy="17.9" r="2.3"/><path d="M8.3 5.3 12.9 1.3V9.2Z"/></g></svg>
<div class="t mono" style="left:894.5px;top:764.4999999999999px;font-size:20.6px;letter-spacing:-.96px;font-weight:700;line-height:24px">2</div>
<svg class="abs" style="left:912.3px;top:771.4px" width="20" height="10" viewBox="0 0 20 10"><g fill="none" stroke="#666" stroke-width="2.05" stroke-linecap="round"><circle cx="10" cy="5" r="3.3"/><path d="M.9 5H6.2M13.8 5H19.1"/></g></svg>
<div class="t mono" style="left:938.0999999999999px;top:764.4999999999999px;font-size:20.6px;letter-spacing:-.96px;line-height:24px;color:#1f75cb">902ecd26</div>
<div class="av" style="left:869.1px;top:794.5px;width:27.4px;height:27.4px"><svg><use href="#av"/></svg></div>
<div class="t" style="left:909px;top:794px;font-size:20.5px;line-height:24px;letter-spacing:.45px">merge</div>
<svg class="abs" style="left:1208.2px;top:775.6999999999999px" width="32" height="32" viewBox="0 0 32 32"><circle cx="16" cy="16" r="15.3" fill="#fff" stroke="#108548" stroke-width="1.4"/><path d="M10.4 15.8 14.45 19.8 21.8 12.45" fill="none" stroke="#108548" stroke-width="3.1" stroke-linejoin="miter"/></svg>
<svg class="abs" style="left:1462.9px;top:764.5px" width="20" height="20" viewBox="0 0 20 20"><g fill="none" stroke="#666" stroke-linecap="round" stroke-linejoin="round"><circle cx="10" cy="11" r="6.6" stroke-width="2"/><path d="M9.7 7.6V11.3L12.3 13.5" stroke-width="1.8"/><path d="M14.9 5.3 16.1 4.1" stroke-width="1.8"/></g><rect x="8" y="1.5" width="4.2" height="2.2" rx=".4" fill="#666"/></svg>
<div class="t gray" style="left:1494px;top:763.8px;font-size:20.7px;line-height:24px;letter-spacing:.3px">00:00:37</div>
<svg class="abs" style="left:1462.9px;top:794px" width="20" height="20" viewBox="0 0 20 20"><g fill="none" stroke="#666" stroke-linejoin="round"><rect x="3.35" y="4.95" width="13.1" height="11.2" rx="1.3" stroke-width="1.9"/><path d="M3.4 8.7H16.4" stroke-width="1.7"/><path d="M6.9 2.4V5M13.3 2.4V5" stroke-width="1.8" stroke-linecap="round"/></g></svg>
<div class="t gray" style="left:1494px;top:792.9px;font-size:20.7px;line-height:24px;letter-spacing:-.1px">17 hours ago</div>
<div class="dots" style="top:767.2px;"><i style="top:10.8px"></i><i style="top:19.5px"></i><i style="top:28.2px"></i></div>
<div class="hline" style="left:333px;top:971px;width:1706px;height:1.5px;background:#dcdcdc"></div>
<div class="badge" style="top:899.1px;width:119px;border-color:#108548"></div>
<svg class="abs" style="left:368px;top:907.6px;fill:#108548" width="23" height="23"><use href="#ok"/></svg>
<div class="t" style="left:397.3px;top:904.8000000000001px;font-size:20.5px;line-height:24px;color:#108548;letter-spacing:.2px">passed</div>
<div class="t" style="left:526.5px;top:904.5px;font-size:21px;line-height:24px;color:#303030;text-decoration:underline;text-decoration-thickness:1.3px;text-underline-offset:1.5px;letter-spacing:.95px">#333538980</div>
<div class="av" style="left:710.7px;top:898.7px;width:35.6px;height:35.6px"><svg><use href="#av"/></svg></div>
<svg class="abs" style="left:869.5px;top:892.3px" width="18" height="18" viewBox="0 0 18 18"><g fill="none" stroke="#666" stroke-width="2" stroke-linecap="round"><path d="M3.6 2.6V15.4"/><path d="M14 2.6V4.5C14 8.9 3.6 7 3.6 11.8"/></g><g fill="#666"><circle cx="3.6" cy="2.7" r="2.2"/><circle cx="14" cy="2.7" r="2.2"/><circle cx="3.6" cy="15.3" r="2.2"/></g></svg>
<div class="t mono" style="left:894.5px;top:889.5999999999999px;font-size:20.6px;letter-spacing:-.96px;font-weight:700;line-height:24px">IM-5</div>
<svg class="abs" style="left:946.5px;top:896.5px" width="20" height="10" viewBox="0 0 20 10"><g fill="none" stroke="#666" stroke-width="2.05" stroke-linecap="round"><circle cx="10" cy="5" r="3.3"/><path d="M.9 5H6.2M13.8 5H19.1"/></g></svg>
<div class="t mono" style="left:972.3px;top:889.5999999999999px;font-size:20.6px;letter-spacing:-.96px;line-height:24px;color:#1f75cb">902ecd26</div>
<div class="av" style="left:869.1px;top:919px;width:27.4px;height:27.4px"><svg><use href="#av"/></svg></div>
<div class="t" style="left:909px;top:918.5px;font-size:20.5px;line-height:24px;letter-spacing:.45px">merge</div>
<div class="abs" style="left:1230px;top:916.8px;width:41px;height:2.8px;background:#dfdfe1"></div>
<svg class="abs" style="left:1208.2px;top:900.9px" width="32" height="32" viewBox="0 0 32 32"><circle cx="16" cy="16" r="15.3" fill="#fff" stroke="#108548" stroke-width="1.4"/><path d="M10.4 15.8 14.45 19.8 21.8 12.45" fill="none" stroke="#108548" stroke-width="3.1" stroke-linejoin="miter"/></svg>
<svg class="abs" style="left:1248.9px;top:900.9px" width="32" height="32" viewBox="0 0 32 32"><circle cx="16" cy="16" r="15.3" fill="#fff" stroke="#108548" stroke-width="1.4"/><path d="M10.4 15.8 14.45 19.8 21.8 12.45" fill="none" stroke="#108548" stroke-width="3.1" stroke-linejoin="miter"/></svg>
<svg class="abs" style="left:1462.9px;top:890.5px" width="20" height="20" viewBox="0 0 20 20"><g fill="none" stroke="#666" stroke-linecap="round" stroke-linejoin="round"><circle cx="10" cy="11" r="6.6" stroke-width="2"/><path d="M9.7 7.6V11.3L12.3 13.5" stroke-width="1.8"/><path d="M14.9 5.3 16.1 4.1" stroke-width="1.8"/></g><rect x="8" y="1.5" width="4.2" height="2.2" rx=".4" fill="#666"/></svg>
<div class="t gray" style="left:1494px;top:889.8px;font-size:20.7px;line-height:24px;letter-spacing:.3px">00:01:09</div>
<svg class="abs" style="left:1462.9px;top:920px" width="20" height="20" viewBox="0 0 20 20"><g fill="none" stroke="#666" stroke-linejoin="round"><rect x="3.35" y="4.95" width="13.1" height="11.2" rx="1.3" stroke-width="1.9"/><path d="M3.4 8.7H16.4" stroke-width="1.7"/><path d="M6.9 2.4V5M13.3 2.4V5" stroke-width="1.8" stroke-linecap="round"/></g></svg>
<div class="t gray" style="left:1494px;top:918.9px;font-size:20.7px;line-height:24px;letter-spacing:-.1px">17 hours ago</div>
<div class="dots" style="top:893.2px;"><i style="top:10.8px"></i><i style="top:19.5px"></i><i style="top:28.2px"></i></div>
</body></html>
